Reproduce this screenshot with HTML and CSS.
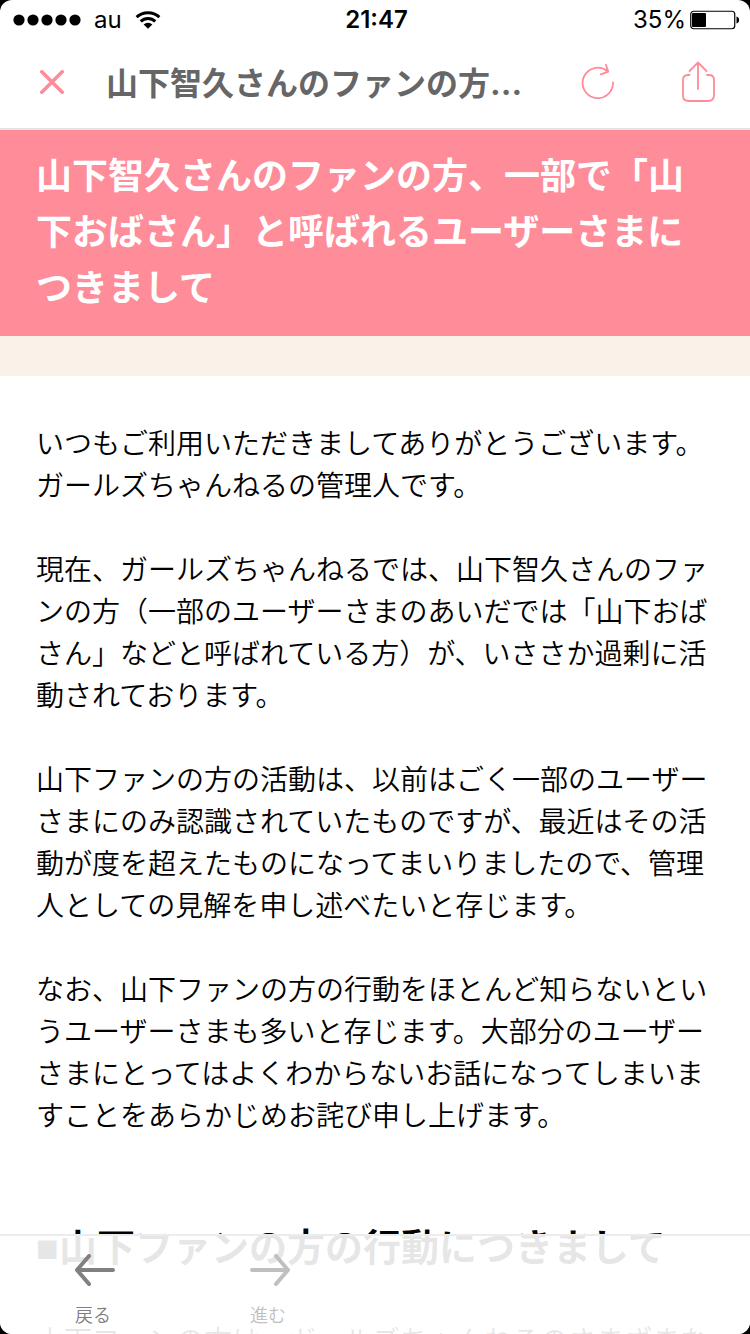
FILE: index.html
```html
<!DOCTYPE html>
<html lang="ja">
<head>
    <meta charset="utf-8">
    <meta content="width=device-width, initial-scale=1.0" name="viewport">
    <title>山下智久さんのファンの方、一部で「山下おばさん」と呼ばれるユーザーさまにつきまして</title>
    <link rel="stylesheet" href="styles.css">
</head>
<body>
    <div class="screen">
        <div class="status">
            <div class="status-left">
                <svg class="signal" width="68" height="12" viewBox="0 0 68 12">
                    <circle cx="6" cy="6" r="5.6"/>
                    <circle cx="20" cy="6" r="5.6"/>
                    <circle cx="34" cy="6" r="5.6"/>
                    <circle cx="48" cy="6" r="5.6"/>
                    <circle cx="62" cy="6" r="5.6"/>
                </svg>
                <span>au</span>
                <svg class="wifi" width="26" height="18" viewBox="0 0 26 18">
                    <path d="M1.6 6.2A16.5 16.5 0 0 1 24.4 6.2M5.7 10.4A10.5 10.5 0 0 1 20.3 10.4" fill="none" stroke="#000" stroke-width="3"/>
                    <path d="M13 17.8L8.6 13.4A6.4 6.4 0 0 1 17.4 13.4Z"/>
                </svg>
            </div>
            <time class="clock">21:47</time>
            <div class="status-right">
                <span>35%</span>
                <svg class="battery" width="50" height="20" viewBox="0 0 50 20">
                    <rect x="0.75" y="1.25" width="44" height="17.5" rx="3" fill="none" stroke="#000" stroke-width="1.2"/>
                    <rect x="2" y="3" width="14" height="14" rx="1"/>
                    <path d="M46.5 6.5C50 7 50 13 46.5 13.5Z"/>
                </svg>
            </div>
        </div>

        <header class="nav">
            <button class="icon-btn" type="button" aria-label="閉じる">
                <svg width="24" height="24" viewBox="0 0 24 24"><path d="M1.8 1.8L22.2 22.2M22.2 1.8L1.8 22.2" stroke-width="3.6"/></svg>
            </button>
            <div class="nav-title">山下智久さんのファンの方...</div>
            <button class="icon-btn" type="button" aria-label="再読み込み">
                <svg width="34" height="40" viewBox="0 0 34 40"><path d="M32 20.5A15.2 15.2 0 1 1 26.5 9.2M24.9 2.8L27.3 9.6L19.9 12.4" stroke-width="1.8"/></svg>
            </button>
            <button class="icon-btn share" type="button" aria-label="共有">
                <svg width="34" height="42" viewBox="0 0 34 42"><path d="M8.5 14H7Q2 14 2 19V35Q2 40 8 40H27Q33 40 33 34V19Q33 14 28 14H26M17 28V2M8.5 10L17 1.5L25.5 10" stroke-width="1.8"/></svg>
            </button>
        </header>

        <main class="content">
            <h1 class="topic">山下智久さんのファンの方、一部で「山下おばさん」と呼ばれるユーザーさまにつきまして</h1>
            <div class="article">
                <p>いつもご利用いただきましてありがとうございます。ガールズちゃんねるの管理人です。</p>
                <p>現在、ガールズちゃんねるでは、山下智久さんのファンの方（一部のユーザーさまのあいだでは「山下おばさん」などと呼ばれている方）が、いささか過剰に活動されております。</p>
                <p>山下ファンの方の活動は、以前はごく一部のユーザーさまにのみ認識されていたものですが、最近はその活動が度を超えたものになってまいりましたので、管理人としての見解を申し述べたいと存じます。</p>
                <p>なお、山下ファンの方の行動をほとんど知らないというユーザーさまも多いと存じます。大部分のユーザーさまにとってはよくわからないお話になってしまいますことをあらかじめお詫び申し上げます。</p>
                <h2><span class="mark">■</span>山下ファンの方の行動につきまして</h2>
                <p>山下ファンの方は、ガールズちゃんねるのさまざまな</p>
            </div>
        </main>

        <nav class="toolbar">
            <button class="tool" type="button">
                <svg width="40" height="32" viewBox="0 0 40 32"><path d="M38 16H2M14 2L2 16L14 30"/></svg>
                <span>戻る</span>
            </button>
            <button class="tool" type="button" disabled>
                <svg width="40" height="32" viewBox="0 0 40 32"><path d="M2 16H38M26 2L38 16L26 30"/></svg>
                <span>進む</span>
            </button>
        </nav>
    </div>
</body>
</html>
```

FILE: styles.css
```css
html, body {
    margin: 0;
    padding: 0;
    height: 100%;
    background: #000;
}
body {
    font-family: "Noto Sans CJK JP", sans-serif;
    color: #000;
}
button {
    margin: 0;
    padding: 0;
    border: 0;
    background: none;
    font: inherit;
    cursor: pointer;
}
svg {
    display: block;
}
.screen {
    position: relative;
    display: flex;
    flex-direction: column;
    height: 100vh;
    overflow: hidden;
    border-radius: 12px;
    background: #fff;
}

/* status bar */
.status {
    display: grid;
    grid-template-columns: 1fr auto 1fr;
    align-items: center;
    height: 40px;
    padding: 0 10px 0 13px;
    font: 24px/40px Inter, sans-serif;
}
.status-left, .status-right {
    display: flex;
    align-items: center;
}
.status-left {
    gap: 13px;
}
.status-right {
    justify-content: flex-end;
    gap: 4px;
}
.clock {
    font-weight: 600;
}

/* title bar */
.nav {
    display: flex;
    align-items: center;
    height: 84px;
    padding: 0 35px 4px 40px;
    border-bottom: 2px solid #e3e3e5;
}
.icon-btn svg {
    fill: none;
    stroke: #ff8c99;
    stroke-linecap: round;
    stroke-linejoin: round;
}
.nav-title {
    flex: 1;
    margin-left: 42px;
    padding-top: 4px;
    overflow: hidden;
    white-space: nowrap;
    font: 700 32px/48px Inter, "Noto Sans CJK JP", sans-serif;
    color: #666;
}
.share {
    margin-left: 66px;
}

/* article */
.content {
    flex: 1;
    min-height: 0;
    overflow-y: auto;
    scrollbar-width: none;
}
.topic {
    margin: 0;
    padding: 15px 36px 23px;
    border-bottom: 40px solid #faf1e8;
    background: #ff8c99;
    color: #fff;
    font-size: 36px;
    font-weight: 700;
    line-height: 56px;
}
.article {
    padding: 45px 36px 100px;
    font-size: 28px;
    font-weight: 350;
    line-height: 42px;
}
.article p {
    margin: 0 0 42px;
}
.article h2 {
    margin: 82px 0 42px;
    font-size: 38px;
    font-weight: 700;
    line-height: 56px;
}
.mark {
    font-family: "Liberation Sans", sans-serif;
}

/* bottom bar, the article shows through it */
.toolbar {
    position: absolute;
    right: 0;
    bottom: 0;
    left: 0;
    display: flex;
    gap: 135px;
    padding: 18px 75px 10px;
    border-top: 2px solid #ececec;
    background: rgba(255, 255, 255, 0.9);
}
.tool {
    display: flex;
    flex-direction: column;
    align-items: flex-start;
    gap: 18px;
    color: #808080;
    font-size: 18px;
    font-weight: 350;
    line-height: 20px;
}
.tool:disabled {
    color: #bfbfbf;
}
.tool path {
    fill: none;
    stroke: currentColor;
    stroke-width: 4;
    stroke-linecap: round;
    stroke-linejoin: round;
}
```
